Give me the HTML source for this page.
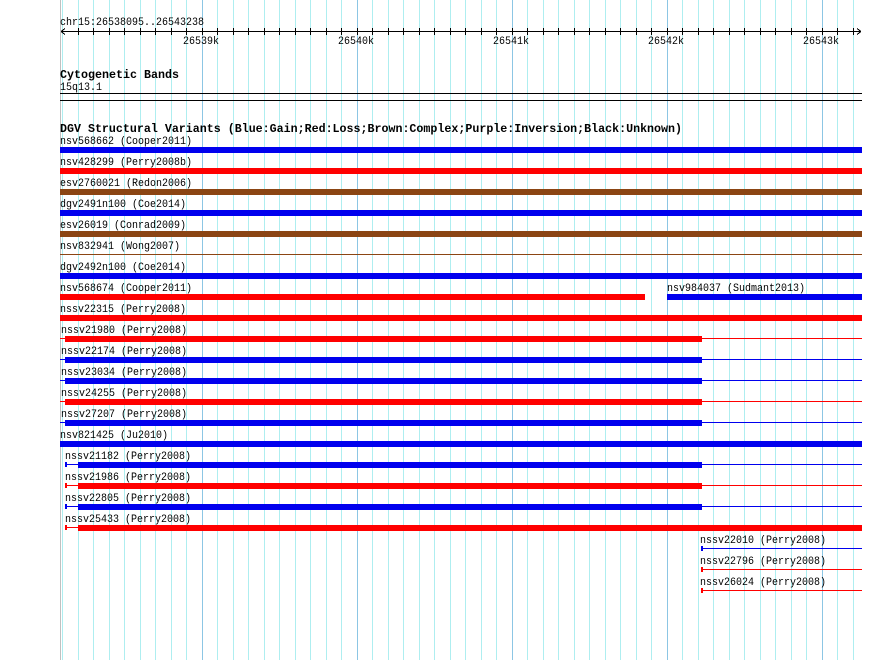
<!DOCTYPE html>
<html><head><meta charset="utf-8"><style>
html,body{margin:0;padding:0;background:#fff;}
svg{display:block;}
text{font-family:"Liberation Mono","DejaVu Sans Mono",monospace;font-size:11px;fill:#000;}
.b{font-weight:bold;font-size:12px;}
</style></head><body>
<svg width="890" height="660" xmlns="http://www.w3.org/2000/svg" shape-rendering="crispEdges">
<path stroke="#aeeef0" stroke-width="1" d="M62.5 0V660M78.5 0V660M93.5 0V660M109.5 0V660M124.5 0V660M140.5 0V660M155.5 0V660M171.5 0V660M186.5 0V660M217.5 0V660M233.5 0V660M248.5 0V660M264.5 0V660M279.5 0V660M295.5 0V660M310.5 0V660M326.5 0V660M341.5 0V660M372.5 0V660M388.5 0V660M403.5 0V660M419.5 0V660M434.5 0V660M450.5 0V660M465.5 0V660M481.5 0V660M496.5 0V660M527.5 0V660M543.5 0V660M558.5 0V660M574.5 0V660M589.5 0V660M605.5 0V660M620.5 0V660M636.5 0V660M651.5 0V660M682.5 0V660M698.5 0V660M713.5 0V660M729.5 0V660M744.5 0V660M760.5 0V660M775.5 0V660M791.5 0V660M806.5 0V660M837.5 0V660M853.5 0V660"/>
<path stroke="#8cc6e4" stroke-width="1" d="M202.5 0V660M357.5 0V660M512.5 0V660M667.5 0V660M822.5 0V660"/>
<path stroke="#c0c0c0" stroke-width="1" d="M60.5 0V660"/>
<text x="60" y="25" textLength="144" lengthAdjust="spacingAndGlyphs">chr15:26538095..26543238</text>
<path stroke="#000" stroke-width="1" fill="none" d="M61 31.5H861M61 31.5l4-3M61 31.5l4 3M861 31.5l-4-3M861 31.5l-4 3"/>
<path stroke="#000" stroke-width="1" d="M78.5 28V35M93.5 28V35M109.5 28V35M124.5 28V35M140.5 28V35M155.5 28V35M171.5 28V35M186.5 28V35M202.5 28V35M217.5 28V35M233.5 28V35M248.5 28V35M264.5 28V35M279.5 28V35M295.5 28V35M310.5 28V35M326.5 28V35M341.5 28V35M357.5 28V35M372.5 28V35M388.5 28V35M403.5 28V35M419.5 28V35M434.5 28V35M450.5 28V35M465.5 28V35M481.5 28V35M496.5 28V35M512.5 28V35M527.5 28V35M543.5 28V35M558.5 28V35M574.5 28V35M589.5 28V35M605.5 28V35M620.5 28V35M636.5 28V35M651.5 28V35M667.5 28V35M682.5 28V35M698.5 28V35M713.5 28V35M729.5 28V35M744.5 28V35M760.5 28V35M775.5 28V35M791.5 28V35M806.5 28V35M822.5 28V35M837.5 28V35M853.5 28V35"/>
<text x="183" y="44" textLength="36" lengthAdjust="spacingAndGlyphs">26539k</text>
<text x="338" y="44" textLength="36" lengthAdjust="spacingAndGlyphs">26540k</text>
<text x="493" y="44" textLength="36" lengthAdjust="spacingAndGlyphs">26541k</text>
<text x="648" y="44" textLength="36" lengthAdjust="spacingAndGlyphs">26542k</text>
<text x="803" y="44" textLength="36" lengthAdjust="spacingAndGlyphs">26543k</text>
<text class="b" x="60" y="78" textLength="119" lengthAdjust="spacingAndGlyphs">Cytogenetic Bands</text>
<text x="60" y="90" textLength="42" lengthAdjust="spacingAndGlyphs">15q13.1</text>
<rect x="60" y="93" width="802" height="1" fill="#000"/>
<rect x="60" y="100" width="802" height="1" fill="#000"/>
<text class="b" x="60" y="132" textLength="622" lengthAdjust="spacingAndGlyphs">DGV Structural Variants (Blue:Gain;Red:Loss;Brown:Complex;Purple:Inversion;Black:Unknown)</text>

<text x="60" y="144" textLength="132" lengthAdjust="spacingAndGlyphs">nsv568662 (Cooper2011)</text>
<rect x="60" y="147" width="802" height="6" fill="#0000ee"/>
<text x="60" y="165" textLength="132" lengthAdjust="spacingAndGlyphs">nsv428299 (Perry2008b)</text>
<rect x="60" y="168" width="802" height="6" fill="#ff0000"/>
<text x="60" y="186" textLength="132" lengthAdjust="spacingAndGlyphs">esv2760021 (Redon2006)</text>
<rect x="60" y="189" width="802" height="6" fill="#8b4513"/>
<text x="60" y="207" textLength="126" lengthAdjust="spacingAndGlyphs">dgv2491n100 (Coe2014)</text>
<rect x="60" y="210" width="802" height="6" fill="#0000ee"/>
<text x="60" y="228" textLength="126" lengthAdjust="spacingAndGlyphs">esv26019 (Conrad2009)</text>
<rect x="60" y="231" width="802" height="6" fill="#8b4513"/>
<text x="60" y="249" textLength="120" lengthAdjust="spacingAndGlyphs">nsv832941 (Wong2007)</text>
<rect x="60" y="254" width="802" height="1" fill="#8b4513"/>
<text x="60" y="270" textLength="126" lengthAdjust="spacingAndGlyphs">dgv2492n100 (Coe2014)</text>
<rect x="60" y="273" width="802" height="6" fill="#0000ee"/>
<text x="60" y="291" textLength="132" lengthAdjust="spacingAndGlyphs">nsv568674 (Cooper2011)</text>
<rect x="60" y="294" width="585" height="6" fill="#ff0000"/>
<text x="667" y="291" textLength="138" lengthAdjust="spacingAndGlyphs">nsv984037 (Sudmant2013)</text>
<rect x="667" y="294" width="195" height="6" fill="#0000ee"/>
<text x="60" y="312" textLength="126" lengthAdjust="spacingAndGlyphs">nssv22315 (Perry2008)</text>
<rect x="60" y="315" width="802" height="6" fill="#ff0000"/>

<text x="61" y="333" textLength="126" lengthAdjust="spacingAndGlyphs">nssv21980 (Perry2008)</text>
<rect x="60" y="338" width="802" height="1" fill="#ff0000"/><rect x="65" y="336" width="637" height="6" fill="#ff0000"/>
<text x="61" y="354" textLength="126" lengthAdjust="spacingAndGlyphs">nssv22174 (Perry2008)</text>
<rect x="60" y="359" width="802" height="1" fill="#0000ee"/><rect x="65" y="357" width="637" height="6" fill="#0000ee"/>
<text x="61" y="375" textLength="126" lengthAdjust="spacingAndGlyphs">nssv23034 (Perry2008)</text>
<rect x="60" y="380" width="802" height="1" fill="#0000ee"/><rect x="65" y="378" width="637" height="6" fill="#0000ee"/>
<text x="61" y="396" textLength="126" lengthAdjust="spacingAndGlyphs">nssv24255 (Perry2008)</text>
<rect x="60" y="401" width="802" height="1" fill="#ff0000"/><rect x="65" y="399" width="637" height="6" fill="#ff0000"/>
<text x="61" y="417" textLength="126" lengthAdjust="spacingAndGlyphs">nssv27207 (Perry2008)</text>
<rect x="60" y="422" width="802" height="1" fill="#0000ee"/><rect x="65" y="420" width="637" height="6" fill="#0000ee"/>
<text x="60" y="438" textLength="108" lengthAdjust="spacingAndGlyphs">nsv821425 (Ju2010)</text>
<rect x="60" y="441" width="802" height="6" fill="#0000ee"/>

<text x="65" y="459" textLength="126" lengthAdjust="spacingAndGlyphs">nssv21182 (Perry2008)</text>
<rect x="65" y="464" width="797" height="1" fill="#0000ee"/><rect x="65" y="462" width="2" height="5" fill="#0000ee"/><rect x="78" y="462" width="624" height="6" fill="#0000ee"/>
<text x="65" y="480" textLength="126" lengthAdjust="spacingAndGlyphs">nssv21986 (Perry2008)</text>
<rect x="65" y="485" width="797" height="1" fill="#ff0000"/><rect x="65" y="483" width="2" height="5" fill="#ff0000"/><rect x="78" y="483" width="624" height="6" fill="#ff0000"/>
<text x="65" y="501" textLength="126" lengthAdjust="spacingAndGlyphs">nssv22805 (Perry2008)</text>
<rect x="65" y="506" width="797" height="1" fill="#0000ee"/><rect x="65" y="504" width="2" height="5" fill="#0000ee"/><rect x="78" y="504" width="624" height="6" fill="#0000ee"/>
<text x="65" y="522" textLength="126" lengthAdjust="spacingAndGlyphs">nssv25433 (Perry2008)</text>
<rect x="65" y="527" width="13" height="1" fill="#ff0000"/><rect x="65" y="525" width="2" height="5" fill="#ff0000"/><rect x="78" y="525" width="784" height="6" fill="#ff0000"/>

<text x="700" y="543" textLength="126" lengthAdjust="spacingAndGlyphs">nssv22010 (Perry2008)</text>
<rect x="701" y="548" width="161" height="1" fill="#0000ee"/><rect x="701" y="546" width="2" height="5" fill="#0000ee"/>
<text x="700" y="564" textLength="126" lengthAdjust="spacingAndGlyphs">nssv22796 (Perry2008)</text>
<rect x="701" y="569" width="161" height="1" fill="#ff0000"/><rect x="701" y="567" width="2" height="5" fill="#ff0000"/>
<text x="700" y="585" textLength="126" lengthAdjust="spacingAndGlyphs">nssv26024 (Perry2008)</text>
<rect x="701" y="590" width="161" height="1" fill="#ff0000"/><rect x="701" y="588" width="2" height="5" fill="#ff0000"/>
</svg>
</body></html>
